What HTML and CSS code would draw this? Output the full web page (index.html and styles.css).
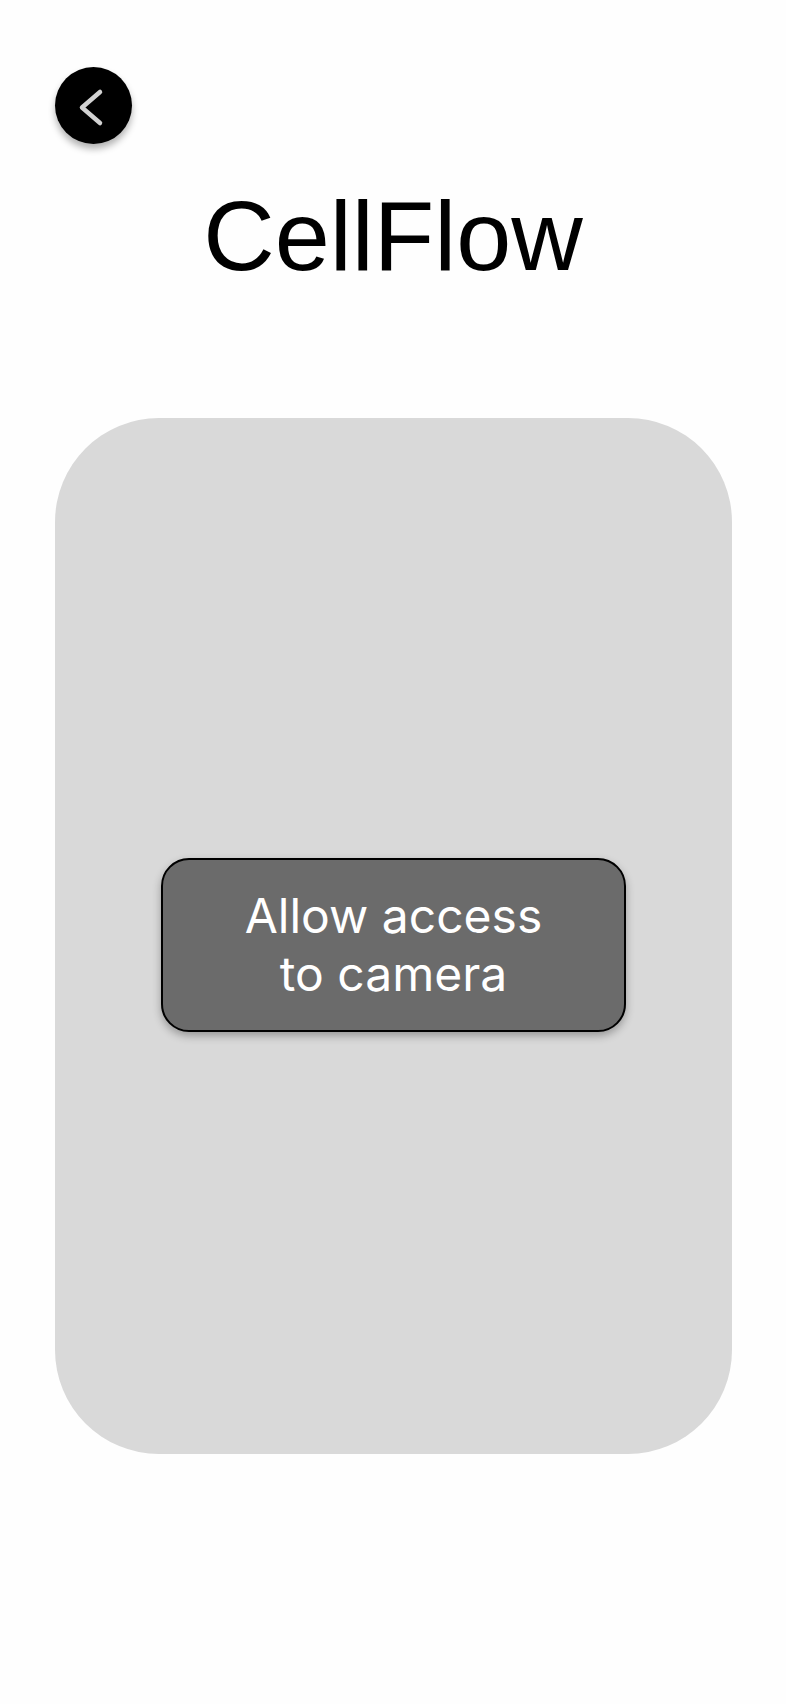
FILE: index.html
```html
<!DOCTYPE html>
<html lang="en">
<head>
    <meta charset="UTF-8">
    <meta name="viewport" content="width=device-width, initial-scale=1.0">
    <title>CellFlow</title>
    <link rel="stylesheet" href="styles.css">
</head>
<body>
    <div class="screen">
        <button class="back-button" aria-label="Back">
            <svg width="77" height="77" viewBox="0 0 77 77">
                <path d="M45 25 L27 40.5 L45 56" fill="none" stroke="#d2d2d2" stroke-width="4.5" stroke-linecap="round" stroke-linejoin="round"/>
            </svg>
        </button>

        <h1 class="title">CellFlow</h1>

        <div class="camera-view">
            <button class="allow-button">Allow access<br>to camera</button>
        </div>
    </div>
</body>
</html>
```

FILE: styles.css
```css
:root {
    --card-grey: #d9d9d9;
    --button-grey: #6b6b6b;
    --black: #000;
    --white: #fff;
}

body {
    margin: 0;
    background-color: #fefefe;
    font-family: 'Liberation Sans', Arial, sans-serif;
}

.screen {
    display: flex;
    flex-direction: column;
    width: 786px;
    min-height: 1704px;
    box-sizing: border-box;
    padding: 67px 0 0;
}

.back-button {
    width: 77px;
    height: 77px;
    margin-left: 55px;
    padding: 0;
    border: none;
    border-radius: 50%;
    background-color: var(--black);
    box-shadow: 0 5px 7px rgba(0, 0, 0, 0.3);
    display: flex;
    align-items: center;
    justify-content: center;
    cursor: pointer;
}

.title {
    margin: 42px 0 0;
    font-size: 99px;
    font-weight: 400;
    line-height: 1;
    text-align: center;
    color: var(--black);
}

.camera-view {
    margin: 133px 0 0 55px;
    width: 677px;
    height: 1036px;
    box-sizing: border-box;
    padding-top: 17px;
    background-color: var(--card-grey);
    border-radius: 104px;
    display: flex;
    align-items: center;
    justify-content: center;
}

.allow-button {
    width: 465px;
    height: 174px;
    box-sizing: border-box;
    border: 2px solid var(--black);
    border-radius: 28px;
    background-color: var(--button-grey);
    color: var(--white);
    font-family: Inter, 'Noto Sans', sans-serif;
    font-size: 48px;
    font-weight: 400;
    line-height: 1.19;
    box-shadow: 0 4px 8px rgba(0, 0, 0, 0.3);
    cursor: pointer;
}
```
